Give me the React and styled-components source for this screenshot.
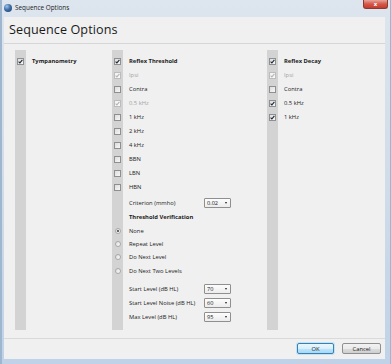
import React from 'react';
import styled, { createGlobalStyle } from 'styled-components';

const Global = createGlobalStyle`
  html, body { margin: 0; padding: 0; background: #fff; }
  body {
    width: 391px; height: 364px; overflow: hidden;
    font-family: "Open Sans", "Noto Sans", sans-serif;
    color: #1b1b1b;
  }
  * { box-sizing: border-box; }
`;

const Window = styled.div`
  width: 391px;
  height: 364px;
  display: flex;
  flex-direction: column;
  padding: 0 6px 5px 4px;
  background: linear-gradient(180deg, #dde5ee 0%, #d2dde9 45%, #bfd2e7 100%);
  box-shadow: inset 2px 0 0 #9fb6cf, inset -1px 0 0 #9fb6cf;
`;

const TitleBar = styled.div`
  height: 17px;
  display: flex;
  align-items: flex-start;
  margin-right: -3px;
`;

const AppIcon = styled.span`
  width: 8px;
  height: 8px;
  margin: 4px 0 0 0;
  border-radius: 50%;
  background: radial-gradient(circle at 35% 30%, #9fc3ea 0%, #3f6fa8 45%, #1b3a66 100%);
  flex-shrink: 0;
`;

const TitleText = styled.span`
  font-size: 6.4px;
  line-height: 8px;
  margin: 4px 0 0 3px;
  color: #222;
`;

const CloseButton = styled.span`
  margin-left: auto;
  width: 25px;
  height: 9px;
  border-radius: 0 0 3px 3px;
  background: linear-gradient(180deg, #e8a499 0%, #d4584a 50%, #c43d2e 100%);
  border: 1px solid #8b3a32;
  border-top: none;
  display: flex;
  align-items: center;
  justify-content: center;
  color: #fff;
  font-size: 6px;
  font-weight: 700;
  line-height: 1;
`;

const Client = styled.div`
  flex: 1;
  display: flex;
  flex-direction: column;
  background: #f0f0f0;
`;

const Header = styled.div`
  height: 27px;
  display: flex;
  align-items: center;
  padding: 0 0 1px 5px;
  border-bottom: 1px solid #d6d6d6;
  font-size: 12.6px;
  color: #1a1a1a;
  letter-spacing: 0.1px;
`;

const Body = styled.div`
  height: 294px;
  display: flex;
  padding: 6px 0 8px 11px;
`;

const Column = styled.div`
  width: ${p => p.$w}px;
  display: flex;
  flex-direction: column;
  padding-top: 4px;
  background: linear-gradient(#d3d3d3, #d3d3d3) left top / 11px 100% no-repeat;
`;

const Row = styled.div`
  height: ${p => p.$h || 14}px;
  margin-top: ${p => p.$mt || 0}px;
  display: flex;
  align-items: center;
`;

const Cell = styled.span`
  width: 11px;
  display: flex;
  justify-content: center;
  align-items: center;
  flex-shrink: 0;
`;

const Label = styled.span`
  margin-left: 6px;
  font-size: 5.8px;
  line-height: 8px;
  white-space: nowrap;
  font-weight: ${p => (p.$bold ? 700 : 400)};
  color: ${p => (p.$disabled ? '#a3a3a3' : '#1b1b1b')};
  width: ${p => (p.$w ? p.$w + 'px' : 'auto')};
`;

const Box = styled.span`
  width: 7px;
  height: 7px;
  border: 1px solid ${p => (p.$disabled ? '#bcbcbc' : '#8e8f8f')};
  background: ${p => (p.$disabled
    ? 'linear-gradient(135deg, #f2f2f2, #fafafa)'
    : 'linear-gradient(135deg, #dcdcdc, #f7f7f7)')};
  display: flex;
  align-items: center;
  justify-content: center;
`;

const Radio = styled.span`
  width: 6px;
  height: 6px;
  border-radius: 50%;
  border: 1px solid #a8a8a8;
  background: linear-gradient(135deg, #dedede, #fbfbfb);
  display: flex;
  align-items: center;
  justify-content: center;
  &::after {
    content: '';
    width: 2px;
    height: 2px;
    border-radius: 50%;
    background: ${p => (p.$on ? '#3a3a3a' : 'transparent')};
  }
`;

const Select = styled.span`
  width: 27px;
  height: 10px;
  border: 1px solid #8f8f8f;
  background: linear-gradient(180deg, #fdfdfd, #ececec);
  display: flex;
  align-items: center;
  justify-content: space-between;
  padding: 0 3px 0 2px;
  font-size: 5.6px;
  color: #1b1b1b;
  border-radius: 1px;
`;

const Arrow = styled.span`
  width: 0;
  height: 0;
  border-left: 1.5px solid transparent;
  border-right: 1.5px solid transparent;
  border-top: 2px solid #222;
`;

const Footer = styled.div`
  height: 21px;
  border-top: 1px solid #dadada;
  display: flex;
  justify-content: flex-end;
  align-items: flex-start;
  gap: 8px;
  padding: 4px 4px 0 0;
`;

const Button = styled.span`
  width: ${p => p.$w}px;
  height: 11px;
  border: 1px solid ${p => (p.$primary ? '#3c7fb1' : '#8f8f8f')};
  border-radius: 2px;
  background: ${p => (p.$primary
    ? 'linear-gradient(180deg, #eaf6fd 0%, #d9f0fc 50%, #bee6fd 51%, #a7d9f5 100%)'
    : 'linear-gradient(180deg, #f2f2f2 0%, #ebebeb 50%, #dddddd 51%, #cfcfcf 100%)')};
  box-shadow: ${p => (p.$primary ? '0 0 0 1px #bfe3f7' : 'none')};
  display: flex;
  align-items: center;
  justify-content: center;
  font-size: 5.8px;
  color: #1b1b1b;
`;

const Check = ({ disabled }) => (
  <svg width="5" height="5" viewBox="0 0 5 5">
    <path d="M0.6 2.6 L1.9 3.9 L4.4 0.8" fill="none" stroke={disabled ? '#b5b5b5' : '#1e2a3a'} strokeWidth="1.1" />
  </svg>
);

const CheckRow = ({ checked, disabled, bold, label, h, mt }) => (
  <Row $h={h} $mt={mt}>
    <Cell>
      <Box $disabled={disabled}>{checked && <Check disabled={disabled} />}</Box>
    </Cell>
    <Label $bold={bold} $disabled={disabled}>{label}</Label>
  </Row>
);

const RadioRow = ({ on, label, h }) => (
  <Row $h={h}>
    <Cell><Radio $on={on} /></Cell>
    <Label>{label}</Label>
  </Row>
);

const SelectRow = ({ label, value, mt, h }) => (
  <Row $mt={mt} $h={h}>
    <Cell />
    <Label $w={75}>{label}</Label>
    <Select>{value}<Arrow /></Select>
  </Row>
);

export default function App() {
  return (
    <>
      <Global />
      <Window>
        <TitleBar>
          <AppIcon />
          <TitleText>Sequence Options</TitleText>
          <CloseButton>x</CloseButton>
        </TitleBar>
        <Client>
          <Header>Sequence Options</Header>
          <Body>
            <Column $w={97}>
              <CheckRow checked bold label="Tympanometry" />
            </Column>
            <Column $w={155}>
              <CheckRow checked bold label="Reflex Threshold" />
              <CheckRow checked disabled label="Ipsi" />
              <CheckRow label="Contra" />
              <CheckRow checked disabled label="0.5 kHz" />
              <CheckRow label="1 kHz" />
              <CheckRow label="2 kHz" />
              <CheckRow label="4 kHz" />
              <CheckRow label="BBN" />
              <CheckRow label="LBN" />
              <CheckRow label="HBN" />
              <SelectRow label="Criterion (mmho)" value="0.02" mt={2} />
              <Row>
                <Cell />
                <Label $bold>Threshold Verification</Label>
              </Row>
              <RadioRow on label="None" h={13} />
              <RadioRow label="Repeat Level" h={13} />
              <RadioRow label="Do Next Level" />
              <RadioRow label="Do Next Two Levels" />
              <SelectRow label="Start Level (dB HL)" value="70" mt={4} />
              <SelectRow label="Start Level Noise (dB HL)" value="60" />
              <SelectRow label="Max Level (dB HL)" value="95" h={13} />
            </Column>
            <Column $w={112}>
              <CheckRow checked bold label="Reflex Decay" />
              <CheckRow checked disabled label="Ipsi" />
              <CheckRow label="Contra" />
              <CheckRow checked label="0.5 kHz" />
              <CheckRow checked label="1 kHz" />
            </Column>
          </Body>
          <Footer>
            <Button $primary $w={37}>OK</Button>
            <Button $w={39}>Cancel</Button>
          </Footer>
        </Client>
      </Window>
    </>
  );
}
